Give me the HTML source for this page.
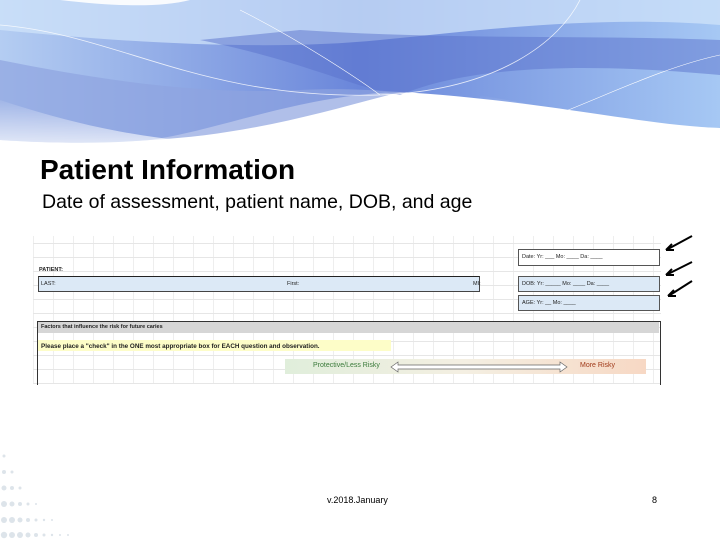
<!DOCTYPE html>
<html><head><meta charset="utf-8"><style>
body{margin:0;width:720px;height:540px;position:relative;overflow:hidden;background:#fff;font-family:"Liberation Sans",sans-serif}
.a{position:absolute}
.t{font-size:5.5px;color:#222;position:absolute;white-space:nowrap}
</style></head><body>
<svg class="a" style="left:0;top:0" width="720" height="160">
<defs>
<linearGradient id="g1" x1="0" x2="1"><stop offset="0" stop-color="#b4cdf2"/><stop offset=".5" stop-color="#6a86da"/><stop offset="1" stop-color="#a6c8f4"/></linearGradient>
<linearGradient id="g2" x1="0" x2="0" y1="0" y2="1"><stop offset="0" stop-color="#fff" stop-opacity="0"/><stop offset="1" stop-color="#fff" stop-opacity=".95"/></linearGradient>
</defs>
<path d="M0 0H720V128C640 125 540 100 400 92C300 95 220 130 150 140C90 145 30 142 0 140Z" fill="url(#g1)"/>
<path d="M0 30C150 45 280 50 380 40C480 30 600 15 720 25V0H0Z" fill="#cfe3f9" opacity=".75"/>
<path d="M60 0C110 6 160 8 190 0Z" fill="#fff" opacity=".9"/>
<path d="M200 40C300 60 360 90 400 95C460 70 560 60 720 75V40C600 35 450 40 300 30Z" fill="#5a72cc" opacity=".5"/>
<path d="M0 60C100 80 200 95 300 90C340 88 370 90 400 92C330 110 250 135 150 140C80 145 30 142 0 140Z" fill="#8ea4df" opacity=".7"/>
<path d="M0 100C120 140 220 150 320 140C360 130 380 110 400 95V160H0Z" fill="url(#g2)"/>
<path d="M480 95C560 110 640 125 720 128V160H480Z" fill="url(#g2)"/>
<path d="M0 25C120 35 200 100 380 95C500 90 560 40 580 0" stroke="#fff" stroke-width=".8" fill="none" opacity=".8"/>
<path d="M240 10C300 40 360 80 380 95" stroke="#fff" stroke-width=".6" fill="none"/>
<path d="M500 135C580 110 650 70 720 55" stroke="#fff" stroke-width=".6" fill="none"/>
</svg>
<div class="a" style="left:40px;top:154px;font-size:28px;font-weight:bold;color:#000">Patient Information</div>
<div class="a" style="left:42px;top:191px;font-size:19.5px;color:#000">Date of assessment, patient name, DOB, and age</div>

<div class="a" style="left:33px;top:236px;width:628px;height:148px;background:repeating-linear-gradient(0deg,#e6e6e6 0 1px,transparent 1px 14px),repeating-linear-gradient(90deg,#eee 0 1px,transparent 1px 20px)"></div>
<div class="t" style="left:39px;top:267px;font-weight:bold">PATIENT:</div>
<div class="a" style="left:38px;top:276px;width:440px;height:14px;background:#dce9f6;border:1px solid #444;border-top:1px solid #222"></div>
<div class="t" style="left:41px;top:281px">LAST:</div>
<div class="t" style="left:287px;top:281px">First:</div>
<div class="t" style="left:473px;top:281px">MI:</div>
<div class="a" style="left:518px;top:249px;width:140px;height:15px;background:#fff;border:1px solid #555"></div>
<div class="t" style="left:522px;top:254px">Date:  Yr: ___  Mo: ____  Da: ____</div>
<div class="a" style="left:518px;top:276px;width:140px;height:14px;background:#dce9f6;border:1px solid #555"></div>
<div class="t" style="left:522px;top:281px">DOB:  Yr: _____  Mo: ____  Da: ____</div>
<div class="a" style="left:518px;top:295px;width:140px;height:14px;background:#dce9f6;border:1px solid #555"></div>
<div class="t" style="left:522px;top:300px">AGE:  Yr:   __  Mo: ____</div>
<div class="a" style="left:37px;top:321px;width:622px;height:63px;border:1px solid #333;border-bottom:none"></div>
<div class="a" style="left:38px;top:322px;width:621px;height:11px;background:#d6d6d6"></div>
<div class="t" style="left:41px;top:324px;font-weight:bold">Factors that influence the risk for future caries</div>
<div class="a" style="left:38px;top:340px;width:353px;height:11px;background:#fdfdc8"></div>
<div class="t" style="left:41px;top:343px;font-weight:bold;font-size:6.3px">Please place a "check" in the ONE most appropriate box for EACH question and observation.</div>
<div class="a" style="left:285px;top:359px;width:361px;height:15px;background:linear-gradient(90deg,#e0eedb,#f4efe2 50%,#f7d8c4)"></div>
<div class="t" style="left:313px;top:362px;color:#3a7a3a;font-size:7px">Protective/Less Risky</div>
<div class="t" style="left:580px;top:362px;color:#a03a1a;font-size:7px">More Risky</div>
<svg class="a" style="left:390px;top:360px" width="180" height="14"><path d="M1 7L8 2V5H170V2L177 7L170 12V9H8V12Z" fill="#fff" stroke="#666" stroke-width=".7"/></svg>
<svg class="a" style="left:660px;top:230px" width="40" height="70" stroke="#000" stroke-width="2" fill="none">
<path d="M32 6L8 19"/><path d="M6 20l6-6M6 20l8 0"/>
<path d="M32 32L8 44"/><path d="M6 45l6-6M6 45l8 0"/>
<path d="M32 51L10 65"/><path d="M8 66l6-6M8 66l8 0"/>
</svg>
<svg class="a" style="left:0;top:420px" width="200" height="120">
<g fill="#dde4ea">
<circle cx="4" cy="36" r="1.5"/><circle cx="4" cy="52" r="2"/><circle cx="12" cy="52" r="1.5"/><circle cx="4" cy="68" r="2.5"/><circle cx="12" cy="68" r="2"/><circle cx="20" cy="68" r="1.5"/><circle cx="4" cy="84" r="3"/><circle cx="12" cy="84" r="2.5"/><circle cx="20" cy="84" r="2"/><circle cx="28" cy="84" r="1.5"/><circle cx="36" cy="84" r="1"/><circle cx="4" cy="100" r="3"/><circle cx="12" cy="100" r="3"/><circle cx="20" cy="100" r="2.5"/><circle cx="28" cy="100" r="2"/><circle cx="36" cy="100" r="1.5"/><circle cx="44" cy="100" r="1.2"/><circle cx="52" cy="100" r="1"/><circle cx="4" cy="115" r="3.2"/><circle cx="12" cy="115" r="3"/><circle cx="20" cy="115" r="3"/><circle cx="28" cy="115" r="2.5"/><circle cx="36" cy="115" r="2"/><circle cx="44" cy="115" r="1.5"/><circle cx="52" cy="115" r="1.2"/><circle cx="60" cy="115" r="1"/><circle cx="68" cy="115" r="1"/>
</g></svg>
<div class="a" style="left:327px;top:495px;font-size:9px;color:#000">v.2018.January</div>
<div class="a" style="left:652px;top:495px;font-size:9px;color:#000">8</div>
</body></html>
